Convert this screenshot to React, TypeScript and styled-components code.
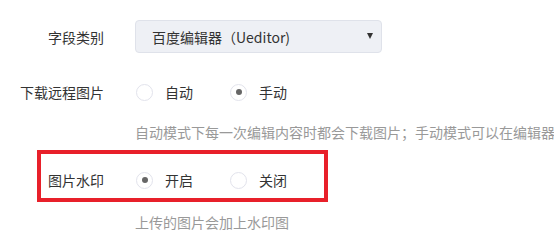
import React from "react";
import styled, { createGlobalStyle } from "styled-components";

const Global = createGlobalStyle`
  html, body { margin: 0; padding: 0; background: #fff; overflow: hidden; }
  body { font-family: "Noto Sans CJK SC", "Noto Sans", sans-serif; font-size: 14px; color: #333; }
`;

const Page = styled.div`
  position: relative;
  width: 554px;
  height: 245px;
  padding-top: 20px;
  box-sizing: border-box;
  overflow: hidden;
`;

const Row = styled.div<{ $top: number; $h: number }>`
  display: flex;
  align-items: center;
  height: ${(p) => p.$h}px;
  margin-top: ${(p) => p.$top}px;
`;

const Label = styled.div`
  width: 104px;
  flex: none;
  text-align: right;
  margin-right: 31px;
  line-height: 20px;
  color: #333;
  white-space: nowrap;
`;

const Select = styled.div`
  width: 247px;
  height: 33px;
  box-sizing: border-box;
  background: #eef0f5;
  border: 1px solid #dfe2ea;
  border-radius: 4px;
  display: flex;
  align-items: center;
  justify-content: space-between;
  padding: 0 8px 0 16px;
  color: #333;
`;

const Arrow = styled.span`
  width: 0;
  height: 0;
  border-left: 3.5px solid transparent;
  border-right: 3.5px solid transparent;
  border-top: 6px solid #333;
  margin-bottom: 1px;
`;

const Option = styled.label`
  display: flex;
  align-items: center;
  margin-right: 36px;
  color: #333;
  line-height: 20px;
`;

const Circle = styled.span<{ $checked?: boolean }>`
  width: 17px;
  height: 17px;
  box-sizing: border-box;
  border: 1px solid #e2e3ec;
  border-radius: 50%;
  margin-left: 1px;
  margin-right: 12px;
  display: flex;
  align-items: center;
  justify-content: center;
  &::after {
    content: "";
    display: ${(p) => (p.$checked ? "block" : "none")};
    width: 6px;
    height: 6px;
    border-radius: 50%;
    background: #666;
  }
`;

const Help = styled.div<{ $top: number }>`
  margin-top: ${(p) => p.$top}px;
  padding-left: 135px;
  line-height: 20px;
  color: #999;
  white-space: nowrap;
`;

const Highlight = styled.div`
  position: absolute;
  left: 37px;
  top: 150px;
  width: 291px;
  height: 52px;
  box-sizing: border-box;
  border: 4px solid #e8202a;
  pointer-events: none;
`;

const Radio = ({ label, checked }: { label: string; checked?: boolean }) => (
  <Option>
    <Circle $checked={checked} />
    {label}
  </Option>
);

export default function App() {
  return (
    <>
      <Global />
      <Page>
        <Row $top={0} $h={33}>
          <Label>字段类别</Label>
          <Select>
            <span>百度编辑器（Ueditor)</span>
            <Arrow />
          </Select>
        </Row>
        <Row $top={29} $h={20}>
          <Label>下载远程图片</Label>
          <Radio label="自动" />
          <Radio label="手动" checked />
        </Row>
        <Help $top={20}>自动模式下每一次编辑内容时都会下载图片；手动模式可以在编辑器</Help>
        <Row $top={28} $h={20}>
          <Label>图片水印</Label>
          <Radio label="开启" checked />
          <Radio label="关闭" />
        </Row>
        <Help $top={22}>上传的图片会加上水印图</Help>
        <Highlight />
      </Page>
    </>
  );
}
